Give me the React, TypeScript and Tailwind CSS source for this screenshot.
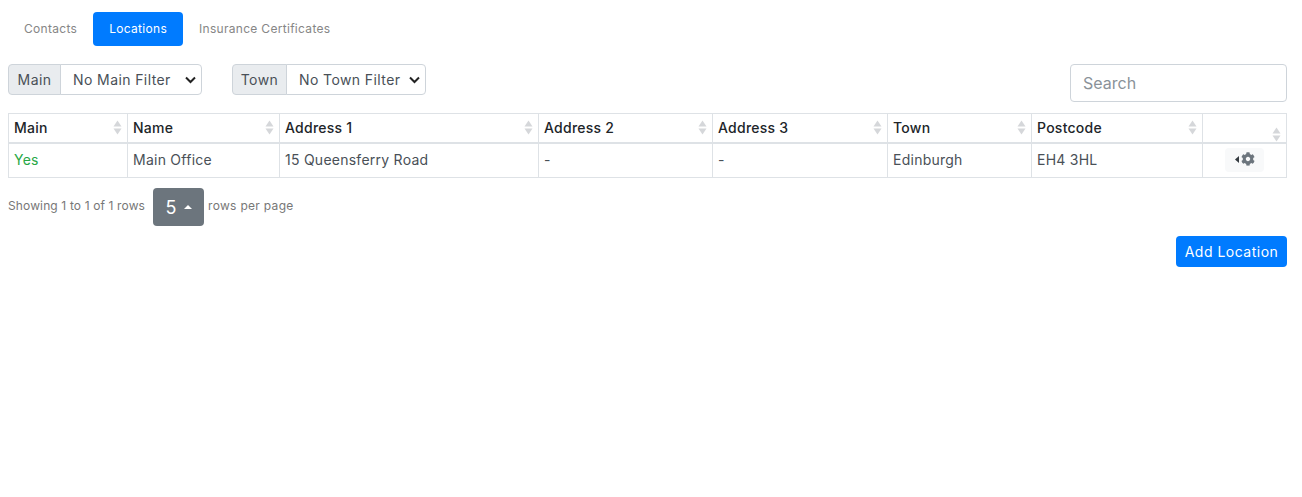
import React from "react";
import { FaCog } from "react-icons/fa";

const columns = [
  { label: "Main", width: "w-[119px]" },
  { label: "Name", width: "w-[152px]" },
  { label: "Address 1", width: "w-[259px]" },
  { label: "Address 2", width: "w-[174px]" },
  { label: "Address 3", width: "w-[175px]" },
  { label: "Town", width: "w-[144px]" },
  { label: "Postcode", width: "w-[171px]" },
];

const SortIcon = () => (
  <svg width="9" height="15" viewBox="0 0 9 15" className="fill-[#d5d7da]">
    <path d="M4.5 0.5 L8.5 6.5 H0.5 Z" />
    <path d="M4.5 14.5 L8.5 8.5 H0.5 Z" />
  </svg>
);

const FilterGroup = ({ label, value, labelWidth, selectWidth }: { label: string; value: string; labelWidth: string; selectWidth: string }) => (
  <div className="flex h-[31px] text-[14px] tracking-[0.4px] text-[#495057]">
    <span className={`${labelWidth} flex items-center justify-center rounded-l border border-[#ced4da] bg-[#e9ecef]`}>{label}</span>
    <div className={`${selectWidth} -ml-px flex items-center justify-between rounded-r border border-[#ced4da] bg-white pl-3 pr-[5px]`}>
      <span>{value}</span>
      <svg width="11" height="8" viewBox="0 0 11 8" fill="none" stroke="#222" strokeWidth="2">
        <path d="M1 1.5 L5.5 6 L10 1.5" />
      </svg>
    </div>
  </div>
);

export default function App() {
  return (
    <div className="min-h-[497px] bg-white pl-2 pr-[15px] font-['Inter',sans-serif] text-[#495057]">
      <nav className="flex pt-3 text-[12px] tracking-[0.3px] text-[#868686]">
        <a className="flex h-[34px] items-center px-4">Contacts</a>
        <a className="flex h-[34px] items-center rounded bg-[#007bff] px-4 text-white">Locations</a>
        <a className="flex h-[34px] items-center px-4">Insurance Certificates</a>
      </nav>

      <div className="flex items-start pt-[18px]">
        <FilterGroup label="Main" value="No Main Filter" labelWidth="w-[53px]" selectWidth="w-[142px]" />
        <div className="ml-[30px]">
          <FilterGroup label="Town" value="No Town Filter" labelWidth="w-[55px]" selectWidth="w-[140px]" />
        </div>
        <input
          placeholder="Search"
          className="ml-auto h-[38px] w-[217px] rounded border border-[#ced4da] px-3 text-[16px] placeholder:text-[#8a9299]"
        />
      </div>

      <table className="mt-[11px] w-[1279px] table-fixed border-collapse text-[14px] tracking-[0.25px]">
        <thead>
          <tr className="h-[29px] border-b-2 border-[#dee2e6] text-[#212529]">
            {columns.map((col) => (
              <th key={col.label} className={`${col.width} border border-[#dee2e6] border-b-2 pl-[5px] pr-[5px] text-left font-medium`}>
                <div className="flex items-center justify-between">
                  {col.label}
                  <SortIcon />
                </div>
              </th>
            ))}
            <th className="border border-[#dee2e6] border-b-2 pr-[5px] align-bottom">
              <div className="flex justify-end">
                <SortIcon />
              </div>
            </th>
          </tr>
        </thead>
        <tbody>
          <tr className="h-[35px]">
            <td className="border border-[#dee2e6] pb-[1px] pl-[5px] text-[#28a745]">Yes</td>
            <td className="border border-[#dee2e6] pb-[1px] pl-[5px]">Main Office</td>
            <td className="border border-[#dee2e6] pb-[1px] pl-[5px]">15 Queensferry Road</td>
            <td className="border border-[#dee2e6] pb-[1px] pl-[5px]">-</td>
            <td className="border border-[#dee2e6] pb-[1px] pl-[5px]">-</td>
            <td className="border border-[#dee2e6] pb-[1px] pl-[5px]">Edinburgh</td>
            <td className="border border-[#dee2e6] pb-[1px] pl-[5px]">EH4 3HL</td>
            <td className="border border-[#dee2e6]">
              <div className="flex justify-center">
                <button className="flex h-6 w-[39px] items-center justify-center gap-[2px] rounded bg-[#f8f9fa] pb-[2px] text-[#6c757d]">
                  <svg width="4" height="7" viewBox="0 0 4 7" className="fill-[#343a40]">
                    <path d="M4 0 V7 L0 3.5 Z" />
                  </svg>
                  <FaCog size={14} />
                </button>
              </div>
            </td>
          </tr>
        </tbody>
      </table>

      <div className="mt-[10px] flex items-center text-[12px] text-[#777]">
        <span className="pb-[2px] tracking-[0.13px]">Showing 1 to 1 of 1 rows</span>
        <button className="ml-2 flex h-[38px] w-[51px] items-center justify-center gap-[7px] rounded bg-[#6c757d] text-[18px] text-white">
          5
          <svg width="8" height="4" viewBox="0 0 8 4" className="fill-white">
            <path d="M0 4 L4 0 L8 4 Z" />
          </svg>
        </button>
        <span className="ml-1 pb-[2px] tracking-[0.3px]">rows per page</span>
      </div>

      <div className="mt-[10px] flex justify-end">
        <button className="h-[31px] w-[111px] rounded bg-[#007bff] pb-[1px] text-[14px] tracking-[0.5px] text-white">Add Location</button>
      </div>
    </div>
  );
}
